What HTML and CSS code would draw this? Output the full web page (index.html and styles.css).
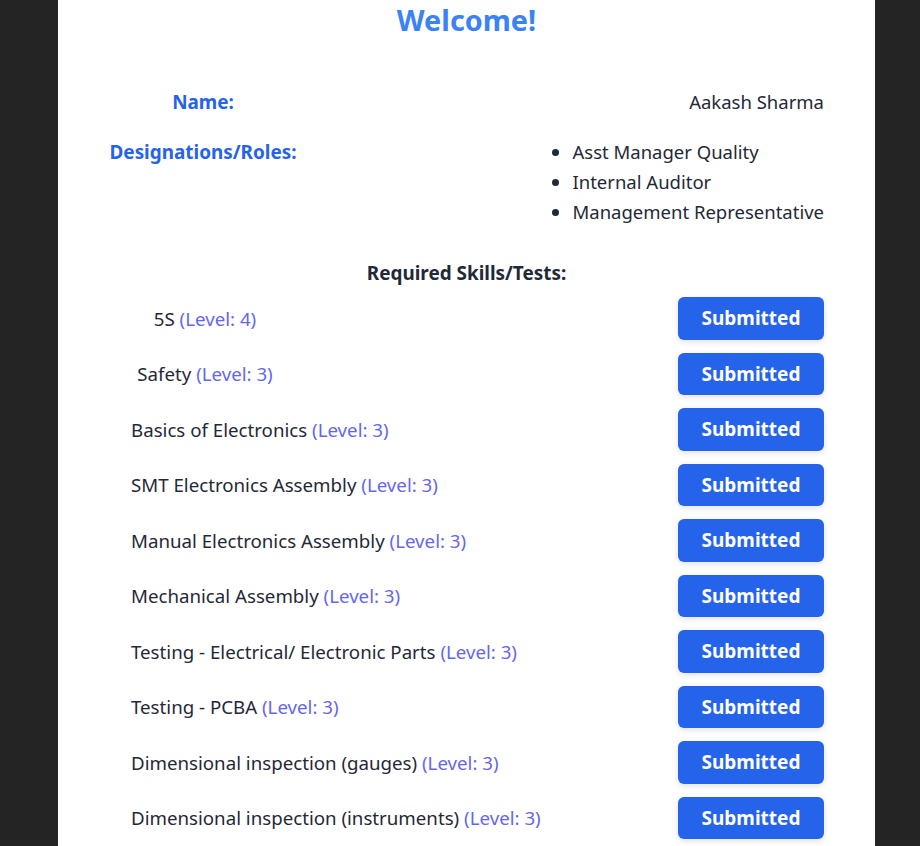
FILE: index.html
```html
<!DOCTYPE html>
<html>
<head>
<meta charset="utf-8">
<link rel="stylesheet" href="styles.css">
</head>
<body>
<div class="panel">
  <h1 class="title">Welcome!</h1>
  <div class="info">
    <div class="info-row">
      <div class="label">Name:</div>
      <div class="value">Aakash Sharma</div>
    </div>
    <div class="info-row">
      <div class="label">Designations/Roles:</div>
      <div class="value">
        <ul class="roles">
          <li>Asst Manager Quality</li>
          <li>Internal Auditor</li>
          <li>Management Representative</li>
        </ul>
      </div>
    </div>
  </div>
  <h2 class="skills-title">Required Skills/Tests:</h2>
  <div class="skills">
    <div class="skill"><div class="skill-name">5S <span class="level">(Level: 4)</span></div><button class="btn">Submitted</button></div>
    <div class="skill"><div class="skill-name">Safety <span class="level">(Level: 3)</span></div><button class="btn">Submitted</button></div>
    <div class="skill"><div class="skill-name">Basics of Electronics <span class="level">(Level: 3)</span></div><button class="btn">Submitted</button></div>
    <div class="skill"><div class="skill-name">SMT Electronics Assembly <span class="level">(Level: 3)</span></div><button class="btn">Submitted</button></div>
    <div class="skill"><div class="skill-name">Manual Electronics Assembly <span class="level">(Level: 3)</span></div><button class="btn">Submitted</button></div>
    <div class="skill"><div class="skill-name">Mechanical Assembly <span class="level">(Level: 3)</span></div><button class="btn">Submitted</button></div>
    <div class="skill"><div class="skill-name">Testing - Electrical/ Electronic Parts <span class="level">(Level: 3)</span></div><button class="btn">Submitted</button></div>
    <div class="skill"><div class="skill-name">Testing - PCBA <span class="level">(Level: 3)</span></div><button class="btn">Submitted</button></div>
    <div class="skill"><div class="skill-name">Dimensional inspection (gauges) <span class="level">(Level: 3)</span></div><button class="btn">Submitted</button></div>
    <div class="skill"><div class="skill-name">Dimensional inspection (instruments) <span class="level">(Level: 3)</span></div><button class="btn">Submitted</button></div>
  </div>
</div>
</body>
</html>
```
FILE: styles.css
```css
html, body {
  margin: 0;
  padding: 0;
  background: #242424;
  font-family: "Noto Sans", "Open Sans", sans-serif;
  color: #1f2937;
}
.panel {
  width: 817px;
  margin-left: 58px;
  background: #ffffff;
  min-height: 846px;
  box-sizing: border-box;
  padding: 0 51px 0 51px;
  box-shadow: 0 0 1px rgba(59,130,246,0.5);
}
.title {
  margin: 0;
  padding-top: 2px;
  text-align: center;
  font-size: 28.8px;
  line-height: 36px;
  font-weight: 700;
  color: #3b82f6;
}
.info {
  margin-top: 49px;
  display: flex;
  flex-direction: column;
  gap: 20px;
}
.info-row {
  display: flex;
  justify-content: space-between;
  align-items: flex-start;
  font-size: 18.5px;
  line-height: 30px;
}
.label {
  width: 188px;
  text-align: center;
  font-weight: 700;
  font-size: 18.9px;
  color: #2563eb;
}
.value {
  text-align: right;
}
.roles {
  margin: 0;
  padding-left: 22px;
  text-align: left;
  line-height: 30px;
}
.skills-title {
  margin: 33px 0 0 0;
  text-align: center;
  font-size: 18.9px;
  line-height: 26px;
  font-weight: 700;
}
.skills {
  margin-top: 11px;
  display: flex;
  flex-direction: column;
  gap: 13px;
  padding-left: 22px;
}
.skill {
  display: flex;
  justify-content: space-between;
  align-items: center;
  font-size: 18.7px;
}
.skill-name {
  min-width: 148px;
  text-align: center;
}
.level {
  color: #6366f1;
}
.btn {
  width: 146px;
  height: 42.5px;
  border: none;
  border-radius: 6px;
  background: #2563eb;
  color: #ffffff;
  font-family: "Noto Sans", "Open Sans", sans-serif;
  font-size: 19px;
  font-weight: 700;
  box-shadow: 0 2px 6px rgba(0,0,0,0.12);
  padding: 0;
}
```
